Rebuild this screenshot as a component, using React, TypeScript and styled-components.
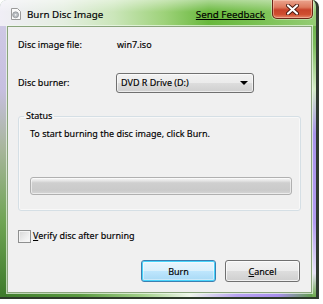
import styled, { createGlobalStyle } from 'styled-components';

const Global = createGlobalStyle`
  html, body {
    margin: 0;
    padding: 0;
    background: #ffffff;
  }
  body {
    font-family: 'Noto Sans', 'Open Sans', sans-serif;
    font-size: 9px;
    color: #000;
    -webkit-text-stroke: 0.15px #000;
  }
`;

const Window = styled.div`
  box-sizing: border-box;
  width: 319px;
  height: 299px;
  display: flex;
  flex-direction: column;
  border-right: 3px solid #2f3a30;
  border-bottom: 2px solid #2c3a2a;
  border-radius: 7px 7px 0 0;
  overflow: hidden;
  background:
    linear-gradient(180deg, rgba(255, 255, 255, 0.45), rgba(255, 255, 255, 0) 12px) top / 100% 26px no-repeat,
    linear-gradient(90deg, #f0eef6 0%, #e4eee0 20%, #cbe6ba 36%, #9ed27a 52%, #68b83c 66%, #78c050 80%, #94cc74 100%) top / 100% 26px no-repeat,
    linear-gradient(180deg, #d2cde6 0%, #c6bfe0 30%, #a8b69c 50%, #6ea452 75%, #3d7a2a 100%) left / 7px 100% no-repeat,
    linear-gradient(180deg, #5ea83c 0%, #7cbc5c 15%, #d4ecc6 30%, #a894ea 45%, #b29cf0 75%, #e6e2f6 92%, #6aa84a 100%) right / 4px 100% no-repeat,
    linear-gradient(90deg, #3f7c2c 0%, #5a9a40 25%, #a2d08a 45%, #eef6ea 60%, #b8a4f0 75%, #a890ec 88%, #5aa03c 100%) bottom / 100% 4px no-repeat,
    #8cc46c;
`;

const TitleBar = styled.div`
  height: 26px;
  display: flex;
  align-items: center;
  flex-shrink: 0;
  font-size: 9.8px;
`;

const TitleIcon = styled.svg`
  margin-left: 11px;
  width: 10px;
  height: 12px;
  margin-top: 2px;
`;

const TitleText = styled.span`
  margin-left: 6px;
  flex: 1;
  margin-top: 2px;
`;

const FeedbackLink = styled.a`
  color: #000;
  text-decoration: underline;
  margin-top: 2px;
  margin-right: 7px;
  cursor: pointer;
`;

const CloseButton = styled.div`
  align-self: flex-start;
  box-sizing: border-box;
  width: 41px;
  height: 19px;
  margin-right: 3px;
  border: 1px solid #6b2416;
  border-top: none;
  border-radius: 0 0 5px 5px;
  background: linear-gradient(180deg, #eba48e 0%, #dd7a5e 40%, #c8432a 55%, #cf4e2f 80%, #e4876a 100%);
  box-shadow: inset 0 0 0 1px rgba(255, 220, 200, 0.45), 0 0 0 1px rgba(255, 255, 255, 0.35);
  display: flex;
  align-items: center;
  justify-content: center;
`;

const Client = styled.div`
  box-sizing: border-box;
  flex: 1;
  margin: 0 4px 4px 7px;
  background: #f0f0f0;
  border: 1px solid #8aa47c;
  box-shadow: 0 0 0 1px rgba(240, 250, 236, 0.7);
  display: flex;
  flex-direction: column;
`;

const FieldRow = styled.div<{ $top: number }>`
  display: grid;
  grid-template-columns: 98px 1fr;
  align-items: center;
  margin-top: ${(p) => p.$top}px;
  padding-left: 10px;
  line-height: 16px;
`;

const Value = styled.span`
  padding-left: 1px;
`;

const Select = styled.div`
  box-sizing: border-box;
  width: 138px;
  height: 20px;
  border: 1px solid #707070;
  border-radius: 3px;
  background: linear-gradient(180deg, #f2f2f2 0%, #ebebeb 50%, #dddddd 51%, #cfcfcf 100%);
  box-shadow: inset 0 0 0 1px rgba(255, 255, 255, 0.6);
  display: flex;
  align-items: center;
  padding: 0 5px 0 4px;
`;

const SelectText = styled.span`
  flex: 1;
`;

const Arrow = styled.span`
  width: 0;
  height: 0;
  border-left: 4px solid transparent;
  border-right: 4px solid transparent;
  border-top: 4px solid #000;
`;

const GroupBox = styled.fieldset`
  box-sizing: border-box;
  width: 283px;
  margin: 15px 0 0 10px;
  padding: 0 8px 15px 11px;
  border: 1px solid #d5dfe5;
  border-radius: 3px;
  box-shadow: inset 0 0 0 1px rgba(255, 255, 255, 0.5);
  min-width: 0;
`;

const Legend = styled.legend`
  margin-left: -6px;
  padding: 0 2px;
  line-height: 16px;
`;

const StatusText = styled.div`
  margin-top: 2px;
  line-height: 16px;
`;

const Progress = styled.div`
  box-sizing: border-box;
  margin-top: 35px;
  height: 18px;
  border: 1px solid #b0b0b0;
  border-radius: 3px;
  background: linear-gradient(180deg, #f6f6f6 0%, #e4e4e4 18%, #cfcfcf 30%, #cacaca 75%, #d6d6d6 100%);
  box-shadow: inset 0 0 0 1px rgba(255, 255, 255, 0.55);
`;

const CheckRow = styled.label`
  display: flex;
  align-items: center;
  margin: 17px 0 0 10px;
  line-height: 16px;
`;

const CheckBox = styled.span`
  box-sizing: border-box;
  width: 13px;
  height: 13px;
  margin-right: 2px;
  border: 1px solid #8e8f8f;
  box-shadow: inset 0 0 0 1px #f4f4f4;
  background: linear-gradient(135deg, #d6d6d6 0%, #eeeeee 60%, #fbfbfb 100%);
`;

const Key = styled.span`
  text-decoration: underline;
`;

const ButtonRow = styled.div`
  display: flex;
  justify-content: flex-end;
  gap: 9px;
  margin: 16px 11px 0 0;
`;

const Button = styled.button<{ $default?: boolean }>`
  box-sizing: border-box;
  width: 75px;
  height: 22px;
  padding: 0;
  font: inherit;
  color: #000;
  border-radius: 3px;
  border: 1px solid ${(p) => (p.$default ? '#3c7fb1' : '#707070')};
  background: ${(p) =>
    p.$default
      ? 'linear-gradient(180deg, #eaf6fd 0%, #d9f0fc 50%, #bee6fd 51%, #a7d9f5 100%)'
      : 'linear-gradient(180deg, #f2f2f2 0%, #ebebeb 50%, #dddddd 51%, #cfcfcf 100%)'};
  box-shadow: ${(p) =>
    p.$default ? 'inset 0 0 0 1px #48d4fb, inset 0 0 0 2px rgba(255,255,255,0.4)' : 'inset 0 0 0 1px rgba(255,255,255,0.7)'};
`;

export default function App() {
  return (
    <>
      <Global />
      <Window>
        <TitleBar>
          <TitleIcon viewBox="0 0 10 12">
            <path d="M0.5 0.5 H6.5 L9.5 3.5 V11.5 H0.5 Z" fill="#fbfbfb" stroke="#9a9a9a" strokeWidth="1" />
            <circle cx="4.6" cy="6.8" r="3" fill="#b8bcc0" stroke="#7c8084" strokeWidth="0.6" />
            <circle cx="4.6" cy="6.8" r="0.9" fill="#f4f4f4" />
          </TitleIcon>
          <TitleText>Burn Disc Image</TitleText>
          <FeedbackLink>Send Feedback</FeedbackLink>
          <CloseButton>
            <svg width="13" height="11" viewBox="0 0 13 11">
              <path d="M2 1.5 L11 9.5 M11 1.5 L2 9.5" stroke="#4a1a10" strokeWidth="4" strokeLinecap="round" />
              <path d="M2 1.5 L11 9.5 M11 1.5 L2 9.5" stroke="#ffffff" strokeWidth="2.2" strokeLinecap="round" />
            </svg>
          </CloseButton>
        </TitleBar>
        <Client>
          <FieldRow $top={10}>
            <span>Disc image file:</span>
            <Value>win7.iso</Value>
          </FieldRow>
          <FieldRow $top={20}>
            <span>Disc burner:</span>
            <Select>
              <SelectText>DVD R Drive (D:)</SelectText>
              <Arrow />
            </Select>
          </FieldRow>
          <GroupBox>
            <Legend>Status</Legend>
            <StatusText>To start burning the disc image, click Burn.</StatusText>
            <Progress />
          </GroupBox>
          <CheckRow>
            <CheckBox />
            <span>
              <Key>V</Key>erify disc after burning
            </span>
          </CheckRow>
          <ButtonRow>
            <Button $default>Burn</Button>
            <Button>
              <Key>C</Key>ancel
            </Button>
          </ButtonRow>
        </Client>
      </Window>
    </>
  );
}
